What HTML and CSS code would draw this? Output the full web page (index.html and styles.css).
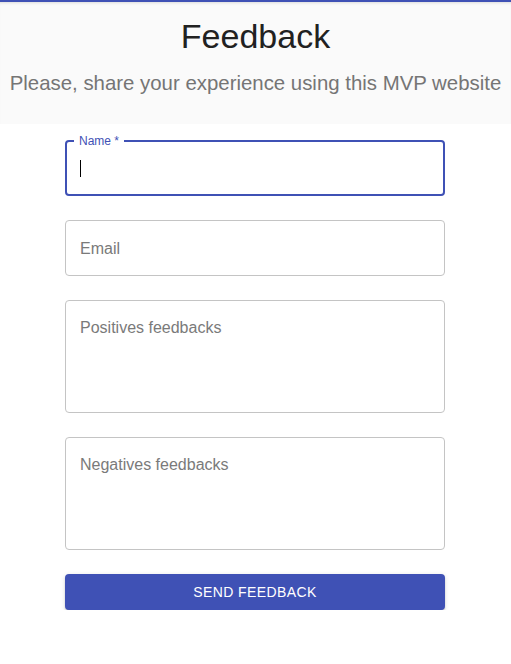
FILE: index.html
```html
<!DOCTYPE html>
<html lang="en">
<head>
<meta charset="utf-8">
<title>Feedback</title>
<link rel="stylesheet" href="styles.css">
</head>
<body>
<header class="hero">
  <h1 class="hero-title">Feedback</h1>
  <p class="hero-sub">Please, share your experience using this MVP website</p>
</header>
<main class="form">
  <div class="field field-focused">
    <span class="field-label">Name *</span>
    <span class="caret"></span>
  </div>
  <div class="field">
    <span class="placeholder">Email</span>
  </div>
  <div class="field field-multi">
    <span class="placeholder">Positives feedbacks</span>
  </div>
  <div class="field field-multi">
    <span class="placeholder">Negatives feedbacks</span>
  </div>
  <button class="send">SEND FEEDBACK</button>
</main>
</body>
</html>
```
FILE: styles.css
```css
* { box-sizing: border-box; }
html, body { margin: 0; padding: 0; background: #ffffff; }
body { font-family: "Liberation Sans", Arial, sans-serif; }

.hero {
  background: #fafafa;
  border-top: 2px solid #3f51b5;
  box-shadow: inset 0 3px 3px -2px rgba(0,0,0,0.12);
  height: 124px;
  padding-top: 13px;
  text-align: center;
}
.hero-title {
  margin: 0;
  font-size: 34px;
  font-weight: 400;
  line-height: 42px;
  color: #212121;
}
.hero-sub {
  margin: 10px 0 0;
  font-size: 20.4px;
  line-height: 32px;
  color: #757575;
}

.form {
  width: 380px;
  margin-left: calc(50% - 190.5px);
  padding-top: 16px;
  display: flex;
  flex-direction: column;
}
.field {
  position: relative;
  height: 56px;
  border: 1px solid #c4c4c4;
  border-radius: 4px;
  margin-bottom: 24px;
  display: flex;
  align-items: center;
  padding: 0 14px;
}
.field-multi {
  height: 113px;
  align-items: flex-start;
  padding-top: 17px;
}
.field-focused {
  border: 2px solid #3f51b5;
  padding: 0 13px;
}
.field-label {
  position: absolute;
  left: 7px;
  top: -8px;
  padding: 0 5px;
  background: #ffffff;
  font-size: 12px;
  line-height: 14px;
  color: #3f51b5;
}
.caret {
  display: block;
  width: 1px;
  height: 17px;
  background: #000000;
}
.placeholder {
  font-size: 16px;
  line-height: 19px;
  color: #7a7a7a;
}
.send {
  height: 36px;
  border: 0;
  border-radius: 4px;
  background: #3f51b5;
  color: #ffffff;
  font-family: "Liberation Sans", Arial, sans-serif;
  font-size: 14px;
  letter-spacing: 0.4px;
  box-shadow: 0 3px 1px -2px rgba(0,0,0,0.2), 0 2px 2px 0 rgba(0,0,0,0.14), 0 1px 5px 0 rgba(0,0,0,0.12);
}
```
